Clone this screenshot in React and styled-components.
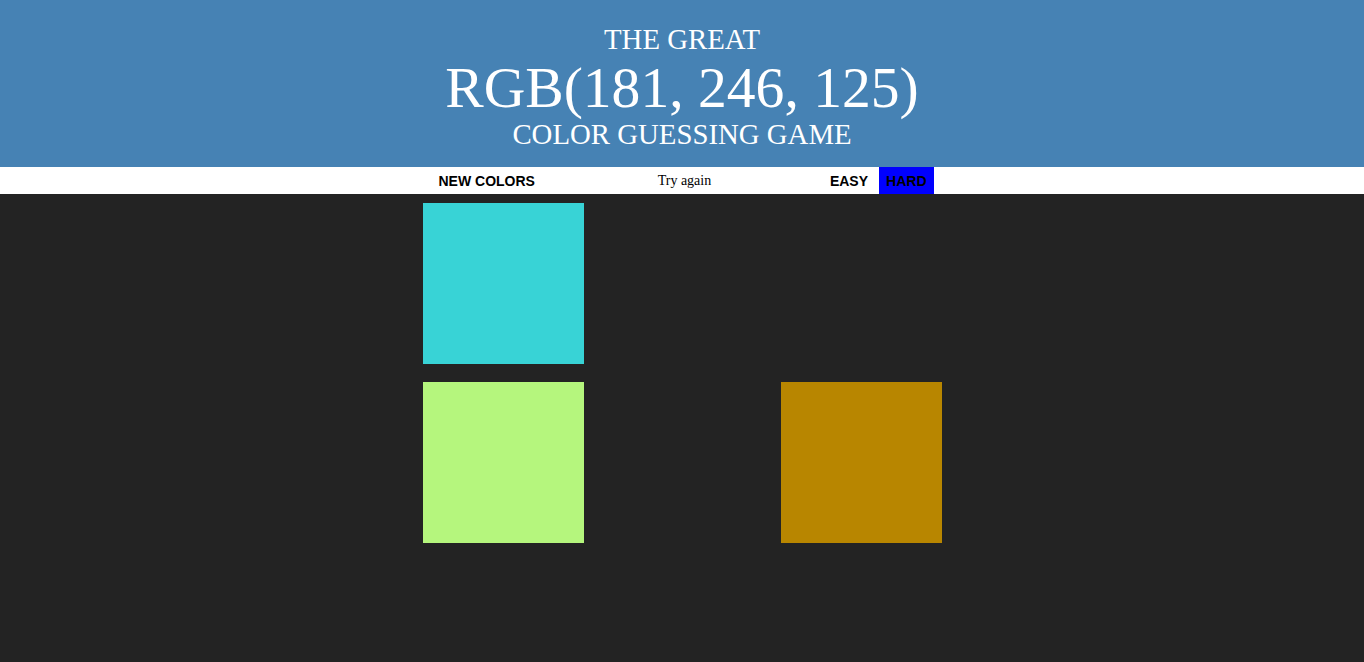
import React from 'react';
import styled, { createGlobalStyle } from 'styled-components';

const GlobalStyle = createGlobalStyle`
  html, body {
    margin: 0;
    padding: 0;
    background: #232323;
    font-family: "Liberation Serif", "Times New Roman", serif;
  }
`;

const Header = styled.h1`
  margin: 0;
  padding: 24px 0 16px;
  background: steelblue;
  color: #ffffff;
  text-align: center;
  text-transform: uppercase;
  font-weight: normal;
  font-size: 28.8px;
  line-height: 1.1;
`;

const ColorDisplay = styled.span`
  display: block;
  font-size: 200%;
`;

const Stripe = styled.div`
  background: #ffffff;
  height: 27px;
  display: flex;
  justify-content: center;
`;

const StripeInner = styled.div`
  width: 519px;
  display: flex;
  align-items: stretch;
`;

const Button = styled.button`
  border: none;
  margin: 0;
  padding: 2px 7px 0;
  height: 100%;
  background: ${props => (props.selected ? '#0000ff' : 'none')};
  color: #000000;
  font-family: "Liberation Sans", Arial, sans-serif;
  font-size: 14px;
  font-weight: 700;
  text-transform: uppercase;
  cursor: pointer;
  outline: none;
`;

const ResetButton = styled(Button)`
  margin-left: 9px;
`;

const Message = styled.span`
  flex: 1;
  display: flex;
  align-items: center;
  justify-content: center;
  padding: 2px 0 0 4px;
  font-size: 14px;
  color: #000000;
`;

const Modes = styled.div`
  display: flex;
  gap: 4px;
  margin-right: 8px;
`;

const Board = styled.div`
  width: 519px;
  margin: 9px auto 0;
  display: grid;
  grid-template-columns: repeat(3, 161px);
  gap: 18px;
`;

const Square = styled.div`
  width: 161px;
  height: 161px;
  background: ${props => props.color};
`;

const squares = [
  'rgb(56, 211, 214)',
  '#232323',
  '#232323',
  'rgb(181, 246, 125)',
  '#232323',
  'rgb(184, 134, 0)',
];

export default function App() {
  return (
    <>
      <GlobalStyle />
      <Header>
        The Great
        <ColorDisplay>RGB(181, 246, 125)</ColorDisplay>
        Color Guessing Game
      </Header>
      <Stripe>
        <StripeInner>
          <ResetButton>New Colors</ResetButton>
          <Message>Try again</Message>
          <Modes>
            <Button>Easy</Button>
            <Button selected>Hard</Button>
          </Modes>
        </StripeInner>
      </Stripe>
      <Board>
        {squares.map((c, i) => (
          <Square key={i} color={c} />
        ))}
      </Board>
    </>
  );
}
